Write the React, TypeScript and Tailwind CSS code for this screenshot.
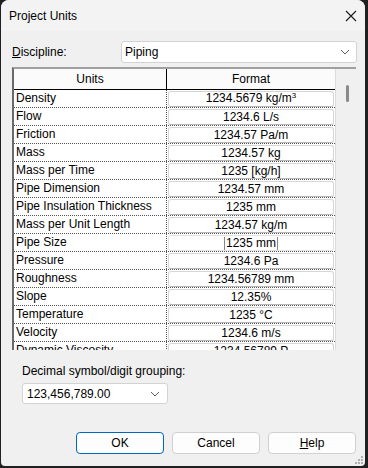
import React from "react";

const rows: [string, React.ReactNode][] = [
  ["Density", <>1234.5679 kg/m<span className="relative -top-[4px] text-[8px]">3</span></>],
  ["Flow", "1234.6 L/s"],
  ["Friction", "1234.57 Pa/m"],
  ["Mass", "1234.57 kg"],
  ["Mass per Time", "1235 [kg/h]"],
  ["Pipe Dimension", "1234.57 mm"],
  ["Pipe Insulation Thickness", "1235 mm"],
  ["Mass per Unit Length", "1234.57 kg/m"],
  ["Pipe Size", "EDIT"],
  ["Pressure", "1234.6 Pa"],
  ["Roughness", "1234.56789 mm"],
  ["Slope", "12.35%"],
  ["Temperature", "1235 °C"],
  ["Velocity", "1234.6 m/s"],
  ["Dynamic Viscosity", "1234.56789 P"],
];

function Chevron() {
  return (
    <svg width="10" height="6" viewBox="0 0 10 6" className="text-[#5f5f5f]">
      <path d="M1 1 L5 5 L9 1" fill="none" stroke="currentColor" strokeWidth="1" />
    </svg>
  );
}

function Row({ name, value }: { name: string; value: React.ReactNode }) {
  return (
    <div className="flex h-[18px] shrink-0 border-b border-dotted border-[#555]">
      <div className="w-[153px] shrink-0 border-r border-dotted border-[#555] pl-[2px] leading-[17px] text-black">
        {name}
      </div>
      <div className="flex w-[168px] shrink-0 items-start justify-center pl-[1px] pr-[1px] pt-[1px]">
        {value === "EDIT" ? (
          <div className="flex h-[16px] w-full items-center justify-center rounded-[3px] border border-[#e2e2e2] bg-white">
            <span className="mr-[1px] h-[13px] w-px bg-[#888]" />
            <span className="leading-[14px]">1235 mm</span>
            <span className="ml-[1px] h-[13px] w-px bg-[#888]" />
          </div>
        ) : (
          <div className="flex h-[16px] w-full items-center justify-center rounded-[3px] border border-[#d6d6d6] border-b-[#b8b8b8] bg-white leading-[14px]">
            <span>{value}</span>
          </div>
        )}
      </div>
    </div>
  );
}

export default function App() {
  return (
    <div
      className="h-[468px] w-[368px] bg-[#202020] pl-px"
      style={{ fontFamily: '"Liberation Sans", Arial, sans-serif' }}
    >
      <div className="flex h-[466px] w-[364px] flex-col overflow-hidden rounded-t-[8px] rounded-b-[4px] bg-[#f0f0f0] text-[12px] text-black">
        {/* Title bar */}
        <div className="flex h-[31px] shrink-0 items-center justify-between bg-[#f3f3f3] pl-[8px] pr-[6px]">
          <span className="text-[12px]">Project Units</span>
          <svg width="12" height="12" viewBox="0 0 12 12" className="mr-[2px]">
            <path d="M1 1 L11 11 M11 1 L1 11" stroke="#1a1a1a" strokeWidth="1.1" />
          </svg>
        </div>

        {/* Discipline */}
        <div className="mt-[10px] flex items-center pl-[11px]">
          <span className="w-[109px]">
            <span className="underline">D</span>iscipline:
          </span>
          <div className="flex h-[22px] w-[236px] items-center justify-between rounded-[3px] border border-[#d3d3d3] bg-white pl-[3px] pr-[6px]">
            <span>Piping</span>
            <Chevron />
          </div>
        </div>

        {/* Table */}
        <div className="ml-[11px] mt-[4px] flex h-[283px] w-[344px] border-t-2 border-l-2 border-t-[#a0a0a0] border-l-[#6a6a6a] bg-white">
          <div className="flex w-[321px] flex-col overflow-hidden text-[12px]">
            <div className="flex h-[21px] shrink-0 border-b border-black bg-[#fbfbfb]">
              <div className="flex w-[153px] shrink-0 items-center justify-center border-r border-black">Units</div>
              <div className="flex w-[168px] shrink-0 items-center justify-center">Format</div>
            </div>
            {rows.map(([n, v]) => (
              <Row key={n} name={n} value={v} />
            ))}
          </div>
          <div className="flex w-[21px] justify-center border-l border-[#dcdcdc] bg-[#f0f0f0] pt-[16px]">
            <div className="ml-[2px] h-[17px] w-[3px] rounded-full bg-[#8a8a8a]" />
          </div>
        </div>

        {/* Decimal */}
        <div className="ml-[21px] mt-[12px]">Decimal symbol/digit grouping:</div>
        <div className="ml-[21px] mt-[3px] flex h-[21px] w-[146px] items-center justify-between rounded-[3px] border border-[#d3d3d3] bg-white pl-[4px] pr-[7px]">
          <span>123,456,789.00</span>
          <Chevron />
        </div>

        {/* Buttons */}
        <div className="mt-[28px] flex gap-[8px] pl-[75px]">
          <div className="flex h-[22px] w-[88px] items-center justify-center rounded-[4px] border border-[#0067c0] bg-[#fdfdfd]">OK</div>
          <div className="flex h-[22px] w-[88px] items-center justify-center rounded-[4px] border border-[#d0d0d0] bg-[#fdfdfd]">Cancel</div>
          <div className="flex h-[22px] w-[88px] items-center justify-center rounded-[4px] border border-[#d0d0d0] bg-[#fdfdfd]">
            <span><span className="underline">H</span>elp</span>
          </div>
        </div>
        <div className="mt-auto flex justify-end pb-[2px] pr-[2px]">
          <svg width="8" height="8" viewBox="0 0 8 8">
            <rect x="6" y="0" width="2" height="2" fill="#b0b0b0" />
            <rect x="3" y="3" width="2" height="2" fill="#b0b0b0" />
            <rect x="6" y="3" width="2" height="2" fill="#b0b0b0" />
            <rect x="0" y="6" width="2" height="2" fill="#b0b0b0" />
            <rect x="3" y="6" width="2" height="2" fill="#b0b0b0" />
            <rect x="6" y="6" width="2" height="2" fill="#b0b0b0" />
          </svg>
        </div>
      </div>
    </div>
  );
}
